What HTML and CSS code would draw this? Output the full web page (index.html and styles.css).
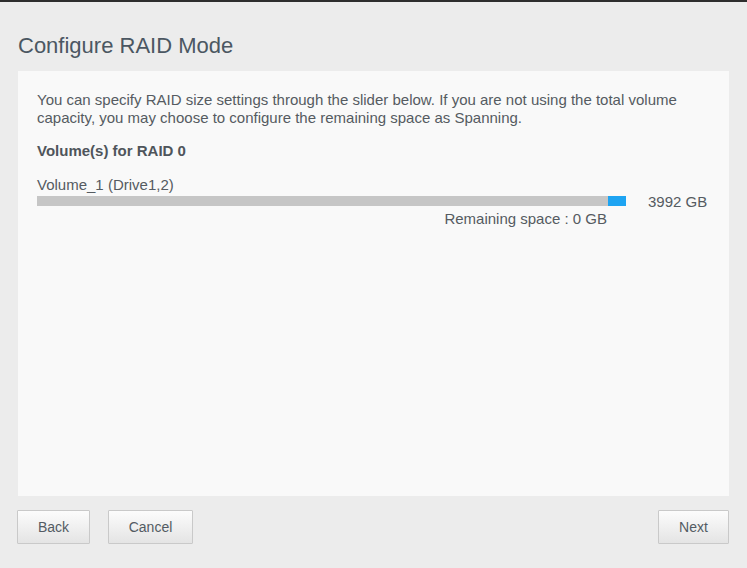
FILE: index.html
```html
<!DOCTYPE html>
<html lang="en">
<head>
    <meta charset="UTF-8">
    <title>Configure RAID Mode</title>
    <link rel="stylesheet" href="styles.css">
</head>
<body>
    <div class="wizard">
        <h1 class="wizard-title">Configure RAID Mode</h1>

        <div class="panel">
            <p class="intro">You can specify RAID size settings through the slider below. If you are not using the total volume capacity, you may choose to configure the remaining space as Spanning.</p>

            <h3 class="section-title">Volume(s) for RAID 0</h3>

            <div class="volume">
                <div class="volume-name">Volume_1 (Drive1,2)</div>
                <div class="slider-row">
                    <div class="slider">
                        <div class="slider-handle"></div>
                    </div>
                    <span class="slider-value">3992 GB</span>
                </div>
                <div class="remaining">Remaining space : 0 GB</div>
            </div>
        </div>

        <div class="actions">
            <button class="btn btn-back">Back</button>
            <button class="btn btn-cancel">Cancel</button>
            <span class="spacer"></span>
            <button class="btn btn-next">Next</button>
        </div>
    </div>
</body>
</html>
```

FILE: styles.css
```css
body {
    margin: 0;
    padding: 0;
    font-family: "Liberation Sans", Arial, sans-serif;
    background-color: #ececec;
    color: #555;
    border-top: 2px solid #2e2e2e;
}

.wizard {
    padding: 0 18px 0 18px;
}

.wizard-title {
    margin: 0;
    padding: 31px 0 13px 0;
    font-size: 22px;
    font-weight: normal;
    line-height: 25px;
    color: #4b5762;
}

.panel {
    background-color: #f9f9f9;
    height: 425px;
    box-sizing: border-box;
    padding: 20px 19px 0 19px;
}

.intro {
    margin: 0;
    font-size: 15px;
    line-height: 18px;
    color: #555b61;
}

.section-title {
    margin: 15px 0 0 0;
    font-size: 15px;
    line-height: 18px;
    font-weight: bold;
    color: #4f555b;
}

.volume {
    margin-top: 16px;
}

.volume-name {
    font-size: 15px;
    line-height: 18px;
    color: #555b61;
}

.slider-row {
    display: flex;
    align-items: center;
    margin-top: 2px;
    height: 10px;
}

.slider {
    display: flex;
    justify-content: flex-end;
    width: 589px;
    height: 10px;
    background-color: #c6c6c6;
}

.slider-handle {
    width: 18px;
    height: 10px;
    background-color: #1ea4f2;
}

.slider-value {
    margin-left: 22px;
    font-size: 15px;
    color: #555b61;
}

.remaining {
    width: 570px;
    margin-top: 4px;
    text-align: right;
    font-size: 15px;
    line-height: 18px;
    color: #555b61;
}

.actions {
    display: flex;
    gap: 18px;
    padding-top: 14px;
    margin-left: -1px;
}

.spacer {
    flex: 1;
}

.btn {
    height: 34px;
    padding: 0;
    border: 1px solid #c9c9c9;
    border-radius: 1px;
    background: linear-gradient(#fcfcfc, #e4e4e4);
    font-family: "Liberation Sans", Arial, sans-serif;
    font-size: 14px;
    color: #535b63;
    cursor: pointer;
}

.btn-back {
    width: 73px;
}

.btn-cancel {
    width: 85px;
}

.btn-next {
    width: 71px;
}
```
